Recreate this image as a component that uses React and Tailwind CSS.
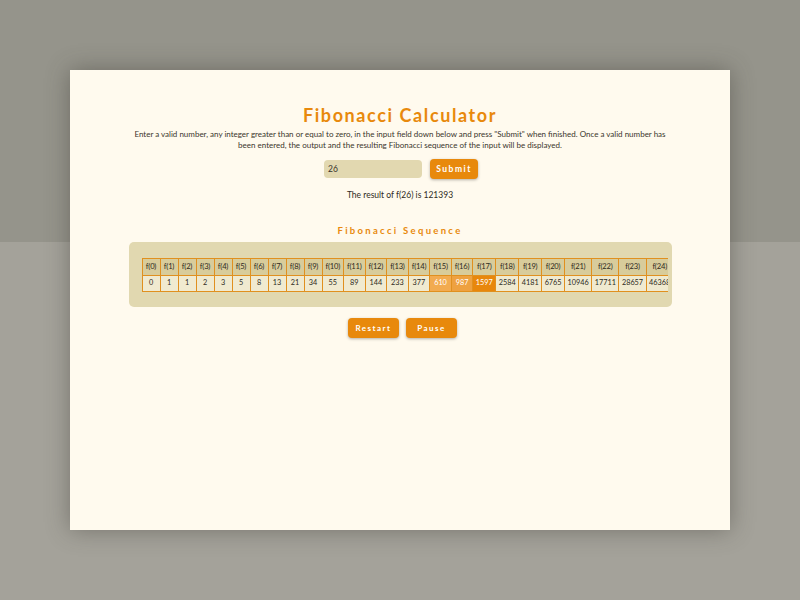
import React from 'react';

// Valores de la secuencia hasta f(24)
const fib = [0, 1];
for (let i = 2; i <= 24; i++) fib.push(fib[i - 1] + fib[i - 2]);

// Celdas resaltadas por la animación
const destacadas = {
  15: 'bg-[#f2ab50] text-white',
  16: 'bg-[#eea140] text-white',
  17: 'bg-[#e8870c] text-white',
};

export default function App() {
  return (
    <div
      className="w-full h-[600px] pt-[70px] px-[70px] bg-[linear-gradient(to_bottom,#95948b_242px,#a4a29a_242px)]"
      style={{ fontFamily: 'Lato, "Open Sans", sans-serif' }}
    >
      <div className="h-[460px] bg-[#fffaee] shadow-[0_0_22px_rgba(60,58,50,0.45)] flex flex-col items-center pt-[33px]">
        <h1 className="text-[18px] leading-[24px] font-bold tracking-[1.6px] text-[#e8890c]">
          Fibonacci Calculator
        </h1>

        <p className="mt-[2px] w-[532px] text-center text-[8px] leading-[11px] text-[#3a352c]">
          Enter a valid number, any integer greater than or equal to zero, in the input field down below and press "Submit" when finished. Once a valid number has been entered, the output and the resulting Fibonacci sequence of the input will be displayed.
        </p>

        <div className="mt-[8px] ml-[2px] flex items-center gap-[8px]">
          <div className="w-[98px] h-[18px] rounded-[4px] bg-[#e2d8b0] px-[4px] flex items-center text-[8.5px] text-[#3a352c]">
            26
          </div>
          <button className="w-[48px] h-[20px] rounded-[4px] bg-[#e8890c] text-white text-[8.5px] font-bold tracking-[1.5px] shadow-[0_1px_3px_rgba(0,0,0,0.3)]">
            Submit
          </button>
        </div>

        <p className="mt-[10px] text-[8.5px] leading-[12px] text-[#2e2a22]">The result of f(26) is 121393</p>

        <h2 className="mt-[24px] text-[9.5px] leading-[12px] font-bold tracking-[2.3px] text-[#e8890c]">
          Fibonacci Sequence
        </h2>

        <div className="mt-[5px] w-[543px] h-[65px] rounded-[5px] bg-[#e1d8b0] pt-[16px] pl-[13px] pr-[4px] overflow-hidden">
          <div className="overflow-hidden">
            <table className="border-collapse text-[#2e2a22] whitespace-nowrap">
              <thead>
                <tr>
                  {fib.map((_, i) => (
                    <th
                      key={i}
                      className="min-w-[18px] w-[20.5px] h-[17px] px-[3px] text-[7.6px] tracking-[-0.2px] border-[1.5px] border-[#e0901f] bg-[#d8cc9b] font-normal"
                    >
                      f({i})
                    </th>
                  ))}
                </tr>
              </thead>
              <tbody>
                <tr>
                  {fib.map((v, i) => (
                    <td
                      key={i}
                      className={`h-[16px] px-[2.5px] text-[7.3px] text-center border-[1.5px] border-[#e0901f] ${destacadas[i] || 'bg-[#f0ead0]'}`}
                    >
                      {v}
                    </td>
                  ))}
                </tr>
              </tbody>
            </table>
          </div>
        </div>

        <div className="mt-[11px] ml-[5px] flex gap-[7px]">
          <button className="w-[51px] h-[20px] rounded-[4px] bg-[#e8890c] text-white text-[8px] font-bold tracking-[1.5px] shadow-[0_1px_3px_rgba(0,0,0,0.3)]">
            Restart
          </button>
          <button className="w-[51px] h-[20px] rounded-[4px] bg-[#e8890c] text-white text-[8px] font-bold tracking-[1.5px] shadow-[0_1px_3px_rgba(0,0,0,0.3)]">
            Pause
          </button>
        </div>
      </div>
    </div>
  );
}
